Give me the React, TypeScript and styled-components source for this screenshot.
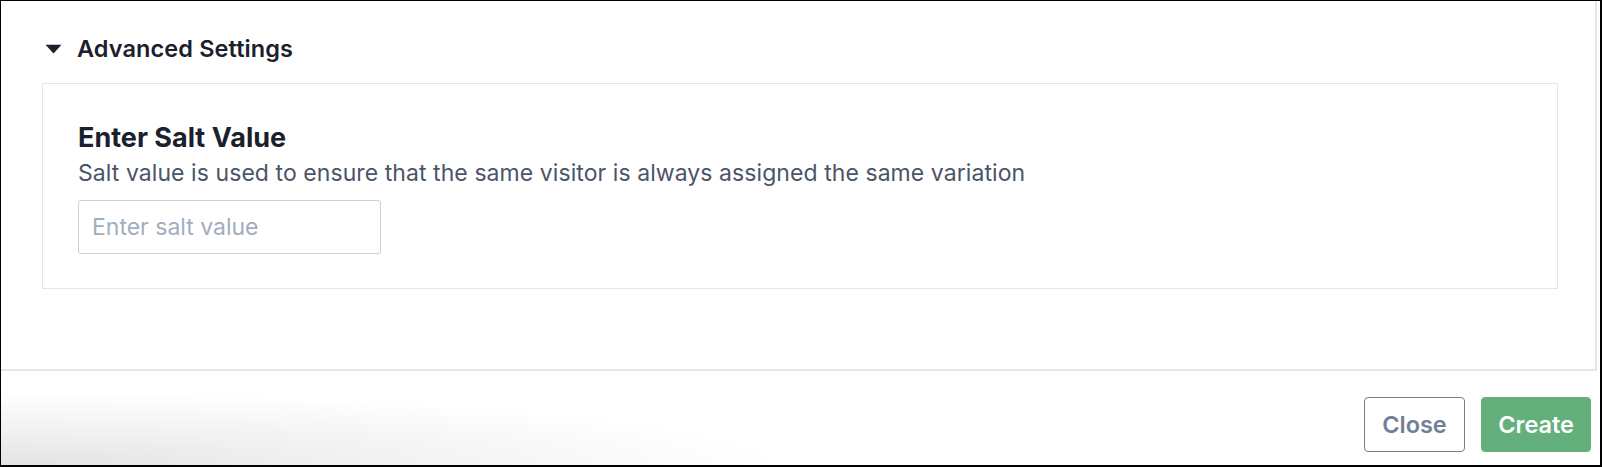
import { useState } from 'react'
import styled, { createGlobalStyle } from 'styled-components'

const Colors = {
  Ink: '#1a202c',
  Body: '#4a5568',
  Muted: '#718096',
  Placeholder: '#a0aec0',
  Line: '#e6e6e6',
  InputBorder: '#cbd0d6',
  Green: '#64b07c',
  White: '#ffffff',
}

const GlobalStyle = createGlobalStyle`
  html, body {
    margin: 0;
    padding: 0;
    background: ${Colors.White};
  }
  body {
    font-family: Inter, "Noto Sans", "Liberation Sans", sans-serif;
    -webkit-font-smoothing: antialiased;
  }
`

export default function App() {
  const [open, setOpen] = useState(true)
  const [salt, setSalt] = useState('')

  return (
    <>
      <GlobalStyle />
      <Frame>
        <Body>
          <Content>
            <Toggle type="button" onClick={() => setOpen(!open)}>
              <Caret $open={open} width="17" height="10" viewBox="0 0 17 10">
                <path d="M0.5 0.8 H16.5 L8.5 9.4 Z" fill="currentColor" />
              </Caret>
              <ToggleLabel>Advanced Settings</ToggleLabel>
            </Toggle>

            {open && (
              <SettingsCard>
                <CardHeading>Enter Salt Value</CardHeading>
                <CardText>
                  Salt value is used to ensure that the same visitor is always assigned the same variation
                </CardText>
                <SaltInput
                  value={salt}
                  placeholder="Enter salt value"
                  onChange={(e) => setSalt(e.target.value)}
                />
              </SettingsCard>
            )}
          </Content>
          <ScrollRail />
        </Body>
        <Divider />
        <Footer>
          <Button $view="outline">Close</Button>
          <Button $view="primary">Create</Button>
        </Footer>
      </Frame>
    </>
  )
}

const Frame = styled.div`
  box-sizing: border-box;
  width: 1602px;
  height: 467px;
  border-style: solid;
  border-color: #000;
  border-width: 1px 2px 2px 1px;
  display: flex;
  flex-direction: column;
  background: ${Colors.White};
  overflow: hidden;
`

const Body = styled.div`
  display: flex;
  height: 368px;
  padding-right: 3px;
`

const Content = styled.div`
  flex: 1;
  padding: 34px 37px 0 41px;
`

const ScrollRail = styled.div`
  width: 2px;
  background: ${Colors.Line};
`

const Toggle = styled.button`
  display: flex;
  align-items: center;
  gap: 15px;
  padding: 0 0 0 3px;
  border: none;
  background: none;
  cursor: pointer;
  color: ${Colors.Ink};
  font-family: inherit;
`

interface CaretProps {
  $open: boolean
}

const Caret = styled.svg<CaretProps>`
  display: block;
  transform: rotate(${({ $open }) => ($open ? '0deg' : '-90deg')});
`

const ToggleLabel = styled.span`
  font-size: 23.5px;
  line-height: 28px;
  font-weight: 600;
  letter-spacing: 0.1px;
`

const SettingsCard = styled.div`
  margin-top: 20px;
  border: 1px solid ${Colors.Line};
  padding: 37px 34px 34px 35px;
  display: flex;
  flex-direction: column;
  align-items: flex-start;
`

const CardHeading = styled.h3`
  margin: 0 0 5px;
  font-size: 27px;
  line-height: 33px;
  font-weight: 700;
  color: ${Colors.Ink};
`

const CardText = styled.p`
  margin: 0 0 13px;
  font-size: 23px;
  line-height: 28px;
  letter-spacing: 0.07px;
  color: ${Colors.Body};
`

const SaltInput = styled.input`
  box-sizing: border-box;
  width: 303px;
  height: 54px;
  padding: 0 13px;
  border: 1px solid ${Colors.InputBorder};
  border-radius: 3px;
  font-family: inherit;
  font-size: 23px;
  color: ${Colors.Ink};
  outline: none;

  &::placeholder {
    color: ${Colors.Placeholder};
  }
`

const Divider = styled.div`
  height: 2px;
  margin-right: 3px;
  background: ${Colors.Line};
`

const Footer = styled.div`
  flex: 1;
  display: flex;
  justify-content: flex-end;
  align-items: flex-start;
  gap: 16px;
  padding: 26px 9px 0 0;
  background: radial-gradient(ellipse 780px 74px at 0% 100%, #e3e3e3 0%, #f1f1f1 45%, rgba(255, 255, 255, 0) 100%);
`

interface ButtonProps {
  $view: 'outline' | 'primary'
}

const Button = styled.button<ButtonProps>`
  box-sizing: border-box;
  height: 55px;
  padding: 0 ${({ $view }) => ($view === 'primary' ? '16px' : '17.5px')};
  border-radius: 4px;
  font-family: inherit;
  font-size: 23.5px;
  font-weight: 600;
  cursor: pointer;
  border: 1px solid ${({ $view }) => ($view === 'primary' ? Colors.Green : Colors.Muted)};
  background: ${({ $view }) => ($view === 'primary' ? Colors.Green : Colors.White)};
  color: ${({ $view }) => ($view === 'primary' ? Colors.White : Colors.Muted)};
`
